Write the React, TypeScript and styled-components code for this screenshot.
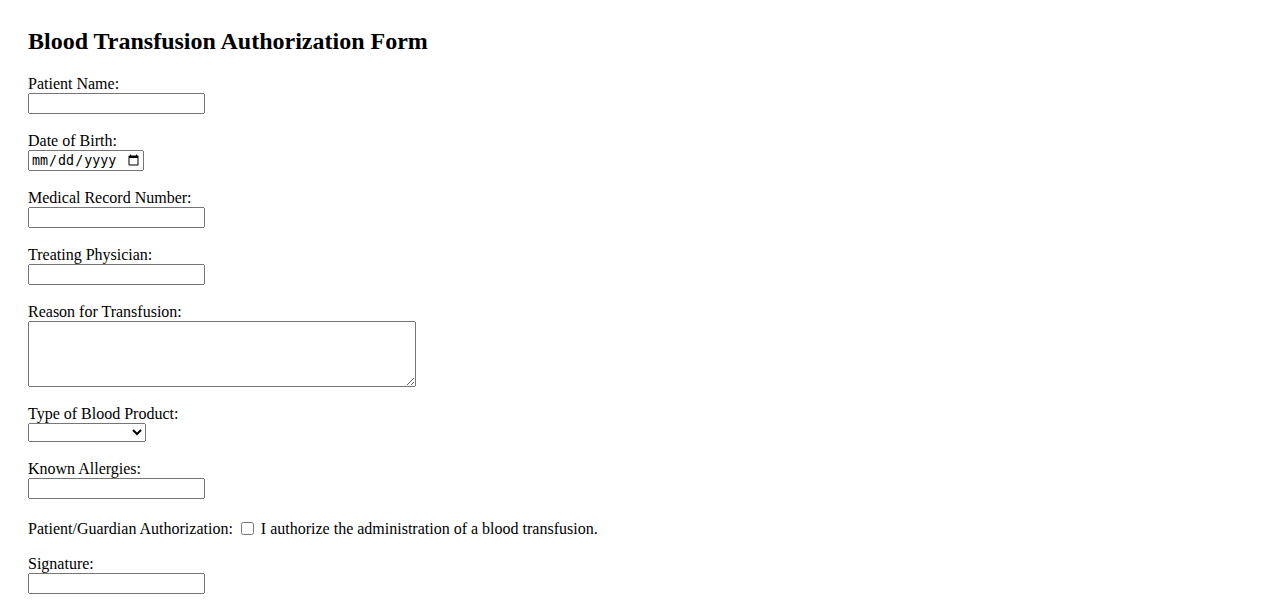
import styled, { createGlobalStyle } from "styled-components";

const GlobalStyle = createGlobalStyle`
  html, body {
    margin: 0;
    padding: 0;
    background: #ffffff;
  }
  body {
    font-family: "Liberation Serif", "Times New Roman", serif;
    font-size: 16px;
    color: #000000;
  }
`;

const Page = styled.div`
  padding: 27px 28px 28px;
`;

const Title = styled.h2`
  margin: 0 0 19px;
  font-size: 24px;
  line-height: 28px;
  font-weight: bold;
`;

const Form = styled.form`
  display: flex;
  flex-direction: column;
`;

const Group = styled.div`
  display: flex;
  flex-direction: column;
  align-items: flex-start;
  margin-bottom: 17px;
`;

const Label = styled.label`
  display: block;
  line-height: 19px;
`;

const TextInput = styled.input`
  box-sizing: border-box;
  width: 177px;
  height: 21px;
  margin: 0;
`;

const DateInput = styled.input`
  box-sizing: border-box;
  width: 116px;
  height: 21px;
  margin: 0;
`;

const TextArea = styled.textarea`
  box-sizing: border-box;
  width: 388px;
  height: 66px;
  margin: 0;
`;

const Select = styled.select`
  box-sizing: border-box;
  width: 118px;
  height: 19px;
  margin: 0;
`;

const InlineRow = styled.div`
  line-height: 20px;
  margin: 3px 0 15px;
`;

const Check = styled.input`
  margin: 0 3px 0 4px;
  width: 13px;
  height: 13px;
  vertical-align: -1px;
`;

type Field = { id: string; label: string };

const topFields: Field[] = [
  { id: "patientName", label: "Patient Name:" },
];

export default function App() {
  return (
    <Page>
      <GlobalStyle />
      <Title>Blood Transfusion Authorization Form</Title>
      <Form onSubmit={(e) => e.preventDefault()}>
        {topFields.map((f) => (
          <Group key={f.id}>
            <Label htmlFor={f.id}>{f.label}</Label>
            <TextInput type="text" id={f.id} name={f.id} />
          </Group>
        ))}
        <Group>
          <Label htmlFor="dob">Date of Birth:</Label>
          <DateInput type="date" id="dob" name="dob" />
        </Group>
        <Group>
          <Label htmlFor="mrn">Medical Record Number:</Label>
          <TextInput type="text" id="mrn" name="mrn" />
        </Group>
        <Group>
          <Label htmlFor="physician">Treating Physician:</Label>
          <TextInput type="text" id="physician" name="physician" />
        </Group>
        <Group>
          <Label htmlFor="reason">Reason for Transfusion:</Label>
          <TextArea id="reason" name="reason" />
        </Group>
        <Group>
          <Label htmlFor="product">Type of Blood Product:</Label>
          <Select id="product" name="product" defaultValue="">
            <option value=""></option>
            <option value="rbc">Red Blood Cells</option>
            <option value="plasma">Plasma</option>
            <option value="platelets">Platelets</option>
          </Select>
        </Group>
        <Group>
          <Label htmlFor="allergies">Known Allergies:</Label>
          <TextInput type="text" id="allergies" name="allergies" />
        </Group>
        <InlineRow>
          <label htmlFor="consent">Patient/Guardian Authorization:</label>{" "}
          <Check type="checkbox" id="consent" name="consent" />{" "}
          I authorize the administration of a blood transfusion.
        </InlineRow>
        <Group>
          <Label htmlFor="signature">Signature:</Label>
          <TextInput type="text" id="signature" name="signature" />
        </Group>
      </Form>
    </Page>
  );
}
